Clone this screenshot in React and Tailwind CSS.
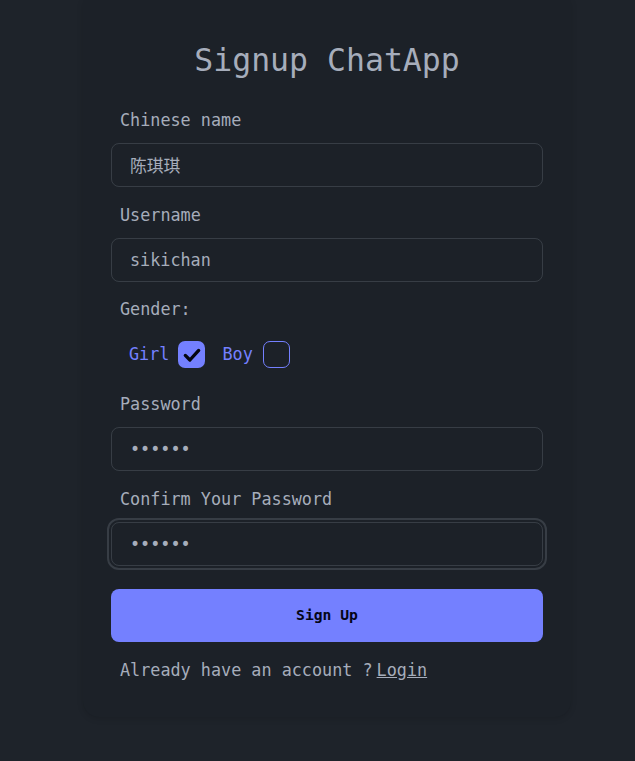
import React from "react";

const mono = { fontFamily: '"DejaVu Sans Mono", "Noto Sans CJK SC", monospace' };

function Label({ children, className = "" }) {
  return (
    <div className={`h-6 leading-6 pl-[9px] text-[16.8px] text-[#a6adbb] ${className}`}>
      {children}
    </div>
  );
}

function Input({ value, type = "text", focused = false }) {
  return (
    <input
      type={type}
      value={value}
      readOnly
      className={`mt-[11px] block w-full h-[44px] rounded-lg border bg-transparent pl-[18px] text-[16.8px] text-[#a6adbb] outline-none ${
        focused
          ? "border-[#a6adbb33] outline-2 outline-offset-2 outline-[#a6adbb33] outline-solid"
          : "border-[#a6adbb33]"
      }`}
      style={{ fontFamily: '"DejaVu Sans Mono", "Noto Sans CJK SC", monospace' }}
    />
  );
}

export default function App() {
  return (
    <div className="min-h-screen bg-[#1e232a] flex" style={mono}>
      <div className="ml-[83px] w-[488px] h-[717px] bg-[#1c2128] rounded-b-2xl shadow-[0_2px_6px_rgba(0,0,0,0.12)] px-[28px] pt-[40px]">
        <h1 className="h-10 leading-10 text-center text-[31.5px] text-[#a6adbb]">
          Signup ChatApp
        </h1>

        <Label className="mt-[28px]">Chinese name</Label>
        <Input value="陈琪琪" />

        <Label className="mt-4">Username</Label>
        <Input value="sikichan" />

        <Label className="mt-[15px]">Gender:</Label>
        <div className="mt-5 flex items-center h-[27px] pl-[18px]">
          <span className="text-[16.8px] text-[#7480ff]">Girl</span>
          <span className="ml-[9px] w-[27px] h-[27px] rounded-[7px] bg-[#7480ff] flex items-center justify-center">
            <svg width="20" height="20" viewBox="0 0 24 24" fill="none">
              <path d="M4 12.5 L9.5 18 L20 6.5" stroke="#05060f" strokeWidth="4" strokeLinecap="round" strokeLinejoin="round" />
            </svg>
          </span>
          <span className="ml-[17px] text-[16.8px] text-[#7480ff]">Boy</span>
          <span className="ml-[10px] w-[27px] h-[27px] rounded-[7px] border border-[#7480ff]"></span>
        </div>

        <Label className="mt-6">Password</Label>
        <Input value="123456" type="password" />

        <Label className="mt-4">Confirm Your Password</Label>
        <Input value="123456" type="password" focused />

        <button className="mt-[23px] w-full h-[53px] rounded-lg bg-[#7480ff] text-[#050617] text-[14.7px] font-bold" style={mono}>
          Sign Up
        </button>

        <div className="mt-4 h-6 leading-6 pl-[9px] text-[16.8px] text-[#a6adbb]">
          Already have an account ?<span className="ml-1 underline">Login</span>
        </div>
      </div>
    </div>
  );
}
